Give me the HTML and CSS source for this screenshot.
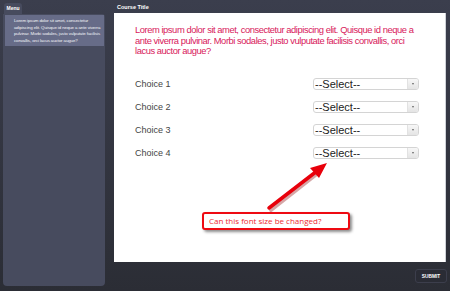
FILE: index.html
```html
<!doctype html>
<html lang="en">
  <head>
    <meta charset="UTF-8" />
    <title>Course</title>
    <link rel="stylesheet" href="styles.css">
  </head>
  <body>
    <div class="app">
      <!-- Left: menu -->
      <div class="sidebar">
        <div class="menu-tab">Menu</div>
        <div class="menu-panel">
          <div class="menu-item">
            Lorem ipsum dolor sit amet, consectetur<br>
            adipiscing elit. Quisque id neque a ante viverra<br>
            pulvinar. Morbi sodales, justo vulputate facilisis<br>
            convallis, orci lacus auctor augue?
          </div>
        </div>
      </div>

      <!-- Right: course content -->
      <div class="main">
        <div class="course-title">Course Title</div>
        <div class="content">
          <p class="question">
            Lorem ipsum dolor sit amet, consectetur adipiscing elit. Quisque id neque a<br>
            ante viverra pulvinar. Morbi sodales, justo vulputate facilisis convallis, orci<br>
            lacus auctor augue?
          </p>

          <div class="choices">
            <div class="choice">
              <span class="choice-label">Choice 1</span>
              <div class="select"><span>--Select--</span><span class="caret"></span></div>
            </div>
            <div class="choice">
              <span class="choice-label">Choice 2</span>
              <div class="select"><span>--Select--</span><span class="caret"></span></div>
            </div>
            <div class="choice">
              <span class="choice-label">Choice 3</span>
              <div class="select"><span>--Select--</span><span class="caret"></span></div>
            </div>
            <div class="choice">
              <span class="choice-label">Choice 4</span>
              <div class="select"><span>--Select--</span><span class="caret"></span></div>
            </div>
          </div>

          <!-- annotation -->
          <svg class="arrow" width="80" height="60" viewBox="0 0 80 60">
            <line x1="5" y1="53" x2="52" y2="16" stroke="#8a0000" stroke-opacity="0.35" stroke-width="4" stroke-linecap="round" transform="translate(1 1)" />
            <line x1="4" y1="52" x2="52" y2="15" stroke="#e8000b" stroke-width="3.5" stroke-linecap="round" />
            <polygon points="62,7 45,12 54,22" fill="#e8000b" />
          </svg>
          <div class="callout">Can this font size be changed?</div>
        </div>
        <div class="footer">
          <button class="submit">SUBMIT</button>
        </div>
      </div>
    </div>
  </body>
</html>
```

FILE: styles.css
```css
html,
body {
  margin: 0;
  padding: 0;
}
body {
  width: 450px;
  height: 291px;
  overflow: hidden;
  font-family: "Liberation Sans", Arial, sans-serif;
  background: linear-gradient(#3b3e4d, #2b2d35);
}
.app {
  display: flex;
  height: 291px;
  box-sizing: border-box;
  padding: 3px 4px 5px 3px;
}
.sidebar {
  width: 102px;
  display: flex;
  flex-direction: column;
}
.menu-tab {
  width: 18px;
  height: 11px;
  margin-left: 1px;
  background-color: #474b5e;
  border-radius: 3px 3px 0 0;
  color: #fff;
  font-size: 5px;
  font-weight: bold;
  line-height: 11px;
  text-align: center;
}
.menu-panel {
  flex: 1;
  background-color: #474b5e;
  border-radius: 0 3px 4px 4px;
  padding: 1px 1px 0 2px;
}
.menu-item {
  background-color: #676c88;
  color: #f4f5f9;
  font-size: 4.4px;
  letter-spacing: -0.1px;
  line-height: 6.6px;
  white-space: nowrap;
  padding: 3px 1px 2px 9px;
}
.main {
  flex: 1;
  margin-left: 9px;
  display: flex;
  flex-direction: column;
}
.course-title {
  height: 10px;
  color: #fff;
  font-size: 5.5px;
  font-weight: bold;
  line-height: 8px;
  padding-left: 3px;
}
.content {
  position: relative;
  height: 249px;
  background-color: #fff;
  border-right: 1px solid #cfd2d8;
  box-sizing: border-box;
  padding: 12px 20px 0 21px;
}
.question {
  margin: 0;
  color: #d8195c;
  font-size: 9.4px;
  letter-spacing: -0.45px;
  line-height: 10.5px;
  white-space: nowrap;
}
.choices {
  margin-top: 16px;
  margin-right: 6px;
}
.choice {
  display: flex;
  align-items: center;
  justify-content: space-between;
  height: 23px;
}
.choice-label {
  color: #444;
  font-size: 9px;
}
.select {
  width: 106px;
  height: 12px;
  box-sizing: border-box;
  border: 1px solid #d4d4d4;
  border-radius: 3px;
  display: flex;
  align-items: center;
  justify-content: space-between;
  color: #222;
  font-size: 11px;
  line-height: 10px;
  padding-left: 1px;
}
.caret {
  width: 10px;
  height: 10px;
  border-left: 1px solid #e2e2e2;
  border-radius: 0 2px 2px 0;
  background: linear-gradient(#f7f7f7, #e4e4e4);
  position: relative;
}
.caret::after {
  content: "";
  position: absolute;
  left: 4px;
  top: 4px;
  border-left: 1.5px solid transparent;
  border-right: 1.5px solid transparent;
  border-top: 2px solid #666;
}
.arrow {
  position: absolute;
  left: 151px;
  top: 143px;
}
.callout {
  position: absolute;
  left: 88px;
  top: 199px;
  width: 148px;
  height: 18px;
  box-sizing: border-box;
  border: 2px solid #ee0a12;
  border-radius: 3px;
  box-shadow: 2px 2px 3px rgba(0, 0, 0, 0.45);
  background-color: #fff;
  color: #ee2a30;
  font-family: "Open Sans", "Noto Sans", sans-serif;
  font-size: 8px;
  line-height: 14px;
  padding-left: 5px;
}
.footer {
  flex: 1;
  display: flex;
  justify-content: flex-end;
  align-items: center;
  padding-top: 4px;
}
.submit {
  width: 32px;
  height: 14px;
  padding: 0;
  margin-right: -1px;
  border: 1px solid #3c3e4c;
  border-radius: 3px;
  background-color: #2a2c35;
  color: #fff;
  font-family: "Liberation Sans", Arial, sans-serif;
  font-size: 4.8px;
  font-weight: bold;
}
```
